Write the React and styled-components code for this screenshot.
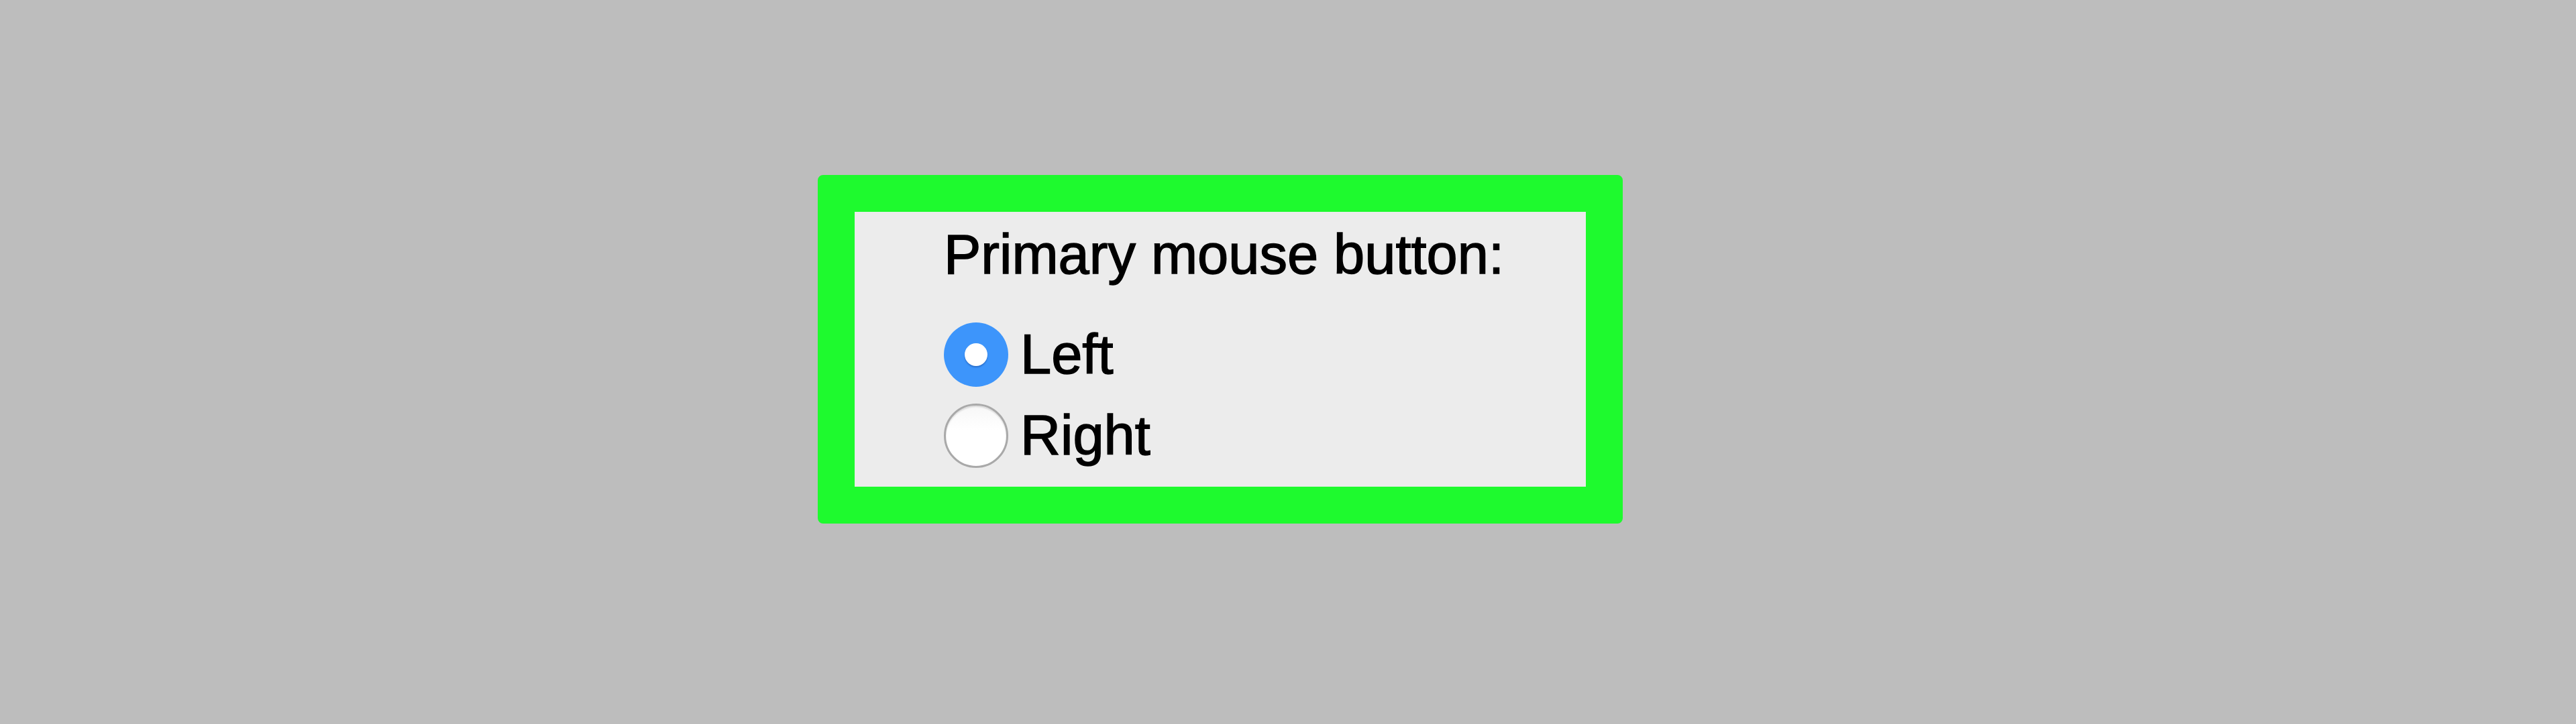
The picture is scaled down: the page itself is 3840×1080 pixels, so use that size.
import React from "react";
import styled, { createGlobalStyle } from "styled-components";

const Global = createGlobalStyle`
  html, body { margin: 0; padding: 0; background: #bdbdbd; }
  body { font-family: "Liberation Sans", Arial, Helvetica, sans-serif; }
`;

const Page = styled.div`
  width: 3840px;
  height: 1080px;
  box-sizing: border-box;
  padding: 261px 0 0 1219px;
  background: #bdbdbd;
`;

const Frame = styled.div`
  width: 1200px;
  height: 520px;
  box-sizing: border-box;
  border: 55px solid #1efa2e;
  border-radius: 8px;
  background: #ececec;
`;

const Panel = styled.div`
  display: flex;
  flex-direction: column;
  padding: 14px 0 0 133px;
  color: #000;
  -webkit-text-stroke: 1.5px #000;
`;

const Heading = styled.div`
  font-size: 83px;
  line-height: 100px;
  margin-bottom: 38px;
`;

const Row = styled.label`
  display: flex;
  align-items: center;
  gap: 18px;
  height: 121px;
  font-size: 83px;
  line-height: 121px;
`;

const Radio = styled.span`
  width: 96px;
  height: 96px;
  border-radius: 50%;
  box-sizing: border-box;
  display: flex;
  align-items: center;
  justify-content: center;
  flex-shrink: 0;
  -webkit-text-stroke: 0;
  background: ${(p) => (p.checked ? "#3d95fb" : "linear-gradient(#f7f7f7, #ffffff 40%)")};
  border: ${(p) => (p.checked ? "none" : "3px solid #a9a9a9")};
  box-shadow: ${(p) => (p.checked ? "none" : "inset 0 2px 2px rgba(0,0,0,0.12)")};
`;

const Dot = styled.span`
  width: 34px;
  height: 34px;
  border-radius: 50%;
  background: #fff;
  box-shadow: 0 2px 2px rgba(0, 40, 120, 0.35);
`;

export default function App() {
  return (
    <>
      <Global />
      <Page>
        <Frame>
          <Panel>
            <Heading>Primary mouse button:</Heading>
            <Row>
              <Radio checked>
                <Dot />
              </Radio>
              Left
            </Row>
            <Row>
              <Radio />
              Right
            </Row>
          </Panel>
        </Frame>
      </Page>
    </>
  );
}
